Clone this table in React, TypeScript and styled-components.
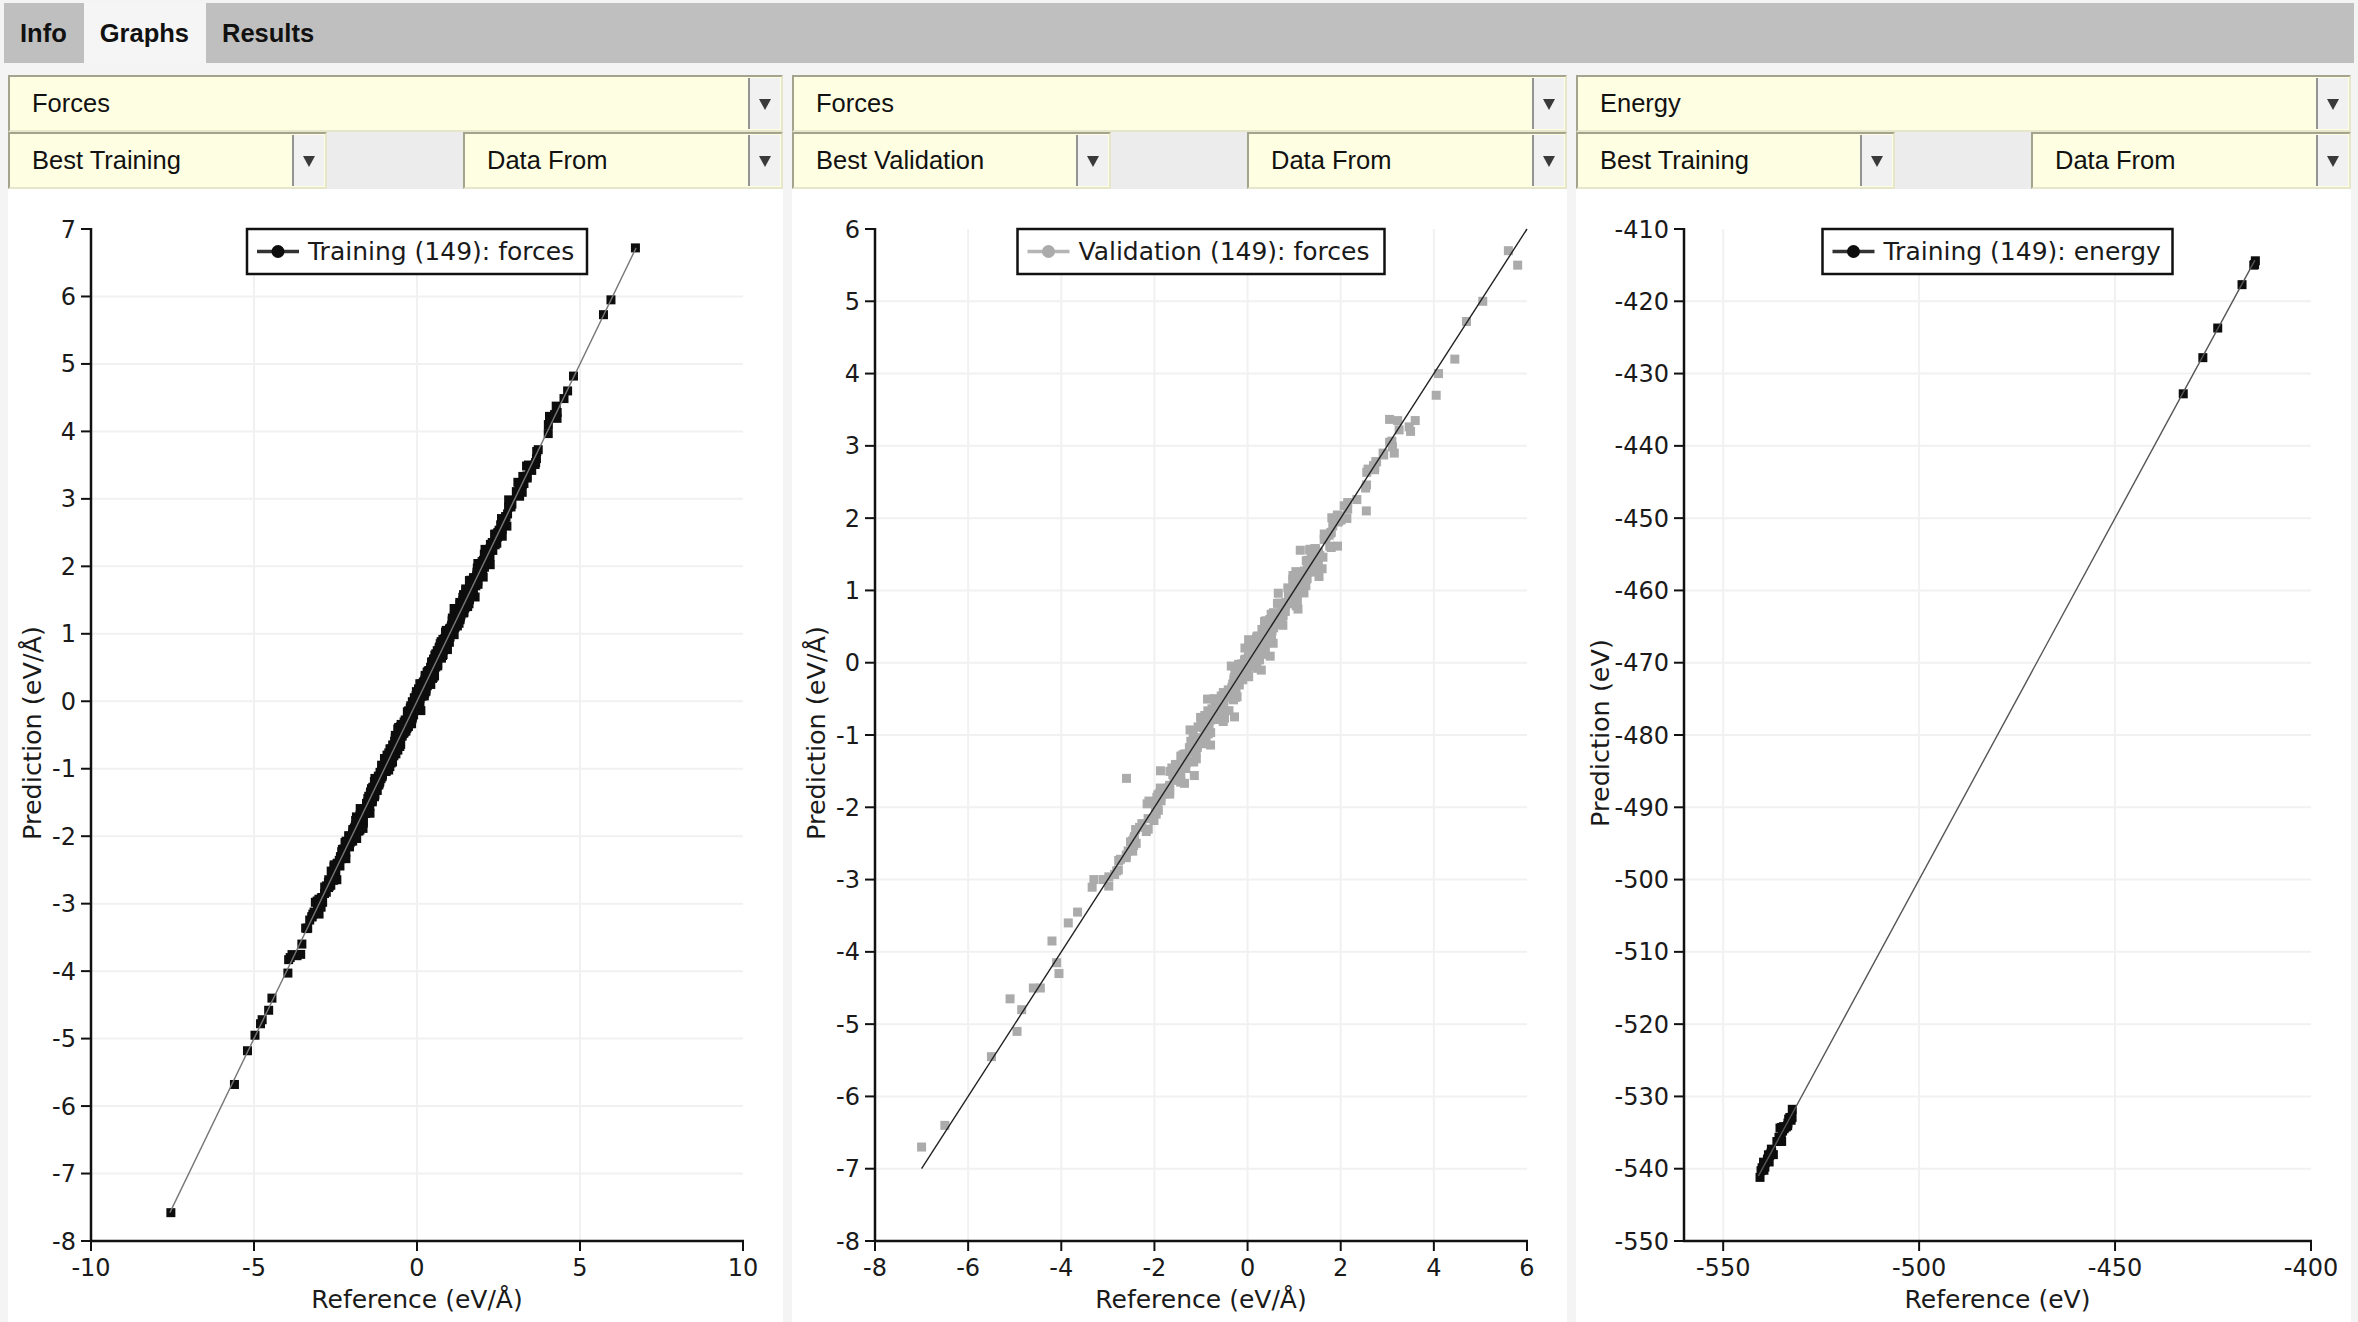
import React, { useMemo } from "react";
import styled, { createGlobalStyle } from "styled-components";

const GlobalStyle = createGlobalStyle`
  html, body { margin: 0; padding: 0; background: #f4f4f4; }
  #root { width: 2358px; height: 1322px; }
`;

const Page = styled.div`
  width: 2358px;
  height: 1322px;
  box-sizing: border-box;
  padding: 3px 4px 0 4px;
  display: flex;
  flex-direction: column;
  background: #f4f4f4;
  font-family: "Liberation Sans", Arial, sans-serif;
  overflow: hidden;
`;

const TabBar = styled.div`
  height: 60px;
  flex: none;
  display: flex;
  align-items: stretch;
  background: #bfbfbf;
`;

const Tab = styled.div<{ $active?: boolean }>`
  display: flex;
  align-items: center;
  padding: 0 17px 0 16px;
  font-weight: bold;
  font-size: 25.5px;
  color: #111;
  background: ${(p) => (p.$active ? "#f5f5f5" : "transparent")};
`;

const Panels = styled.div`
  flex: 1;
  min-height: 0;
  display: grid;
  grid-template-columns: repeat(3, 775px);
  column-gap: 9px;
  padding: 12px 3px 0 4px;
`;

const Panel = styled.div`
  display: flex;
  flex-direction: column;
  min-height: 0;
`;

const SelectBox = styled.div`
  box-sizing: border-box;
  height: 57px;
  display: flex;
  align-items: stretch;
  background: #fefee2;
  border-top: 2px solid #a4a38d;
  border-left: 2px solid #a4a38d;
  border-bottom: 2px solid #e6e6cb;
  border-right: 2px solid #e6e6cb;
`;

const SelectLabel = styled.span`
  flex: 1;
  display: flex;
  align-items: center;
  padding-left: 22px;
  font-size: 25.5px;
  color: #111;
  white-space: nowrap;
`;

const ArrowButton = styled.span`
  width: 30px;
  margin: 1px 1px 1px 0;
  background: #f1f1f1;
  border-left: 2px solid #939393;
  display: flex;
  align-items: center;
  justify-content: center;
  &::after {
    content: "";
    border-left: 6px solid transparent;
    border-right: 6px solid transparent;
    border-top: 11px solid #3a3a3a;
    margin-top: 2px;
  }
`;

const FilterRow = styled.div`
  display: grid;
  grid-template-columns: 319px 1fr 320px;
  height: 57px;
  background: #ececec;
`;

const ChartArea = styled.div`
  flex: 1;
  min-height: 0;
  background: #ffffff;
  overflow: hidden;
`;

const ChartSvg = styled.svg`
  display: block;
`;

const Select: React.FC<{ label: string }> = ({ label }) => (
  <SelectBox>
    <SelectLabel>{label}</SelectLabel>
    <ArrowButton />
  </SelectBox>
);

type Pt = [number, number];

type ChartSpec = {
  xMin: number;
  xMax: number;
  xStep: number;
  xFirst: number;
  yMin: number;
  yMax: number;
  yStep: number;
  left: number;
  legend: string;
  legendWidth: number;
  color: string;
  legendLine: string;
  points: Pt[];
  line: [number, number];
  lineColor: string;
  xTitle: string;
  yTitle: string;
};

const W = 775;
const H = 1133;
const TOP = 40;
const BOTTOM = 1052;
const RIGHT = 735;
const FONT = "'DejaVu Sans', 'Liberation Sans', sans-serif";

function range(a: number, b: number, s: number): number[] {
  const out: number[] = [];
  for (let v = a; v <= b + 1e-9; v += s) out.push(Math.round(v * 1000) / 1000);
  return out;
}

const Chart: React.FC<{ spec: ChartSpec }> = ({ spec }) => {
  const { xMin, xMax, yMin, yMax, left } = spec;
  const sx = (v: number) => left + ((v - xMin) / (xMax - xMin)) * (RIGHT - left);
  const sy = (v: number) => BOTTOM - ((v - yMin) / (yMax - yMin)) * (BOTTOM - TOP);
  const xt = range(spec.xFirst, xMax, spec.xStep);
  const yt = range(yMin, yMax, spec.yStep);
  const cx = (left + RIGHT) / 2;
  const lx = cx - spec.legendWidth / 2;
  return (
    <ChartSvg width={W} height={H} viewBox={`0 0 ${W} ${H}`}>
      {xt
        .filter((v) => v !== xMin && v !== xMax)
        .map((v) => (
          <line key={"gx" + v} x1={sx(v)} x2={sx(v)} y1={TOP} y2={BOTTOM} stroke="#f1f1f1" strokeWidth={2} />
        ))}
      {yt
        .filter((v) => v !== yMin && v !== yMax)
        .map((v) => (
          <line key={"gy" + v} x1={left} x2={RIGHT} y1={sy(v)} y2={sy(v)} stroke="#f1f1f1" strokeWidth={2} />
        ))}
      {spec.points.map(([x, y], i) => (
        <rect key={i} x={sx(x) - 4.5} y={sy(y) - 4.5} width={9} height={9} fill={spec.color} />
      ))}
      <line
        x1={sx(spec.line[0])}
        y1={sy(spec.line[0])}
        x2={sx(spec.line[1])}
        y2={sy(spec.line[1])}
        stroke={spec.lineColor}
        strokeWidth={1.4}
      />
      <line x1={left} x2={left} y1={TOP - 1} y2={BOTTOM + 1} stroke="#111" strokeWidth={2.5} />
      <line x1={left - 1} x2={RIGHT + 1} y1={BOTTOM} y2={BOTTOM} stroke="#111" strokeWidth={2.5} />
      {yt.map((v) => (
        <g key={"ty" + v}>
          <line x1={left - 10} x2={left} y1={sy(v)} y2={sy(v)} stroke="#111" strokeWidth={2} />
          <text x={left - 15} y={sy(v) + 8.5} textAnchor="end" fontFamily={FONT} fontSize={24} fill="#1a1a1a">
            {v}
          </text>
        </g>
      ))}
      {xt.map((v) => (
        <g key={"tx" + v}>
          <line x1={sx(v)} x2={sx(v)} y1={BOTTOM} y2={BOTTOM + 10} stroke="#111" strokeWidth={2} />
          <text x={sx(v)} y={1087} textAnchor="middle" fontFamily={FONT} fontSize={24} fill="#1a1a1a">
            {v}
          </text>
        </g>
      ))}
      <text x={cx} y={1119} textAnchor="middle" fontFamily={FONT} fontSize={25} fill="#1a1a1a">
        {spec.xTitle}
      </text>
      <text
        transform={`translate(33, ${(TOP + BOTTOM) / 2 - 2}) rotate(-90)`}
        textAnchor="middle"
        fontFamily={FONT}
        fontSize={25.5}
        fill="#1a1a1a"
      >
        {spec.yTitle}
      </text>
      <rect x={lx} y={TOP} width={spec.legendWidth} height={45} fill="#fff" stroke="#111" strokeWidth={2.5} />
      <line x1={lx + 10} x2={lx + 52} y1={TOP + 22.5} y2={TOP + 22.5} stroke={spec.legendLine} strokeWidth={3.5} />
      <circle cx={lx + 31} cy={TOP + 22.5} r={6.5} fill={spec.color} />
      <text x={lx + 61} y={TOP + 31} fontFamily={FONT} fontSize={25} fill="#1a1a1a">
        {spec.legend}
      </text>
    </ChartSvg>
  );
};

function mulberry(seed: number) {
  let s = seed;
  return () => {
    s |= 0;
    s = (s + 0x6d2b79f5) | 0;
    let t = Math.imul(s ^ (s >>> 15), 1 | s);
    t = (t + Math.imul(t ^ (t >>> 7), 61 | t)) ^ t;
    return ((t ^ (t >>> 14)) >>> 0) / 4294967296;
  };
}

function gauss(r: () => number) {
  const u = Math.max(r(), 1e-9);
  const v = r();
  return Math.sqrt(-2 * Math.log(u)) * Math.cos(2 * Math.PI * v);
}

function trainingForces(): Pt[] {
  const r = mulberry(17);
  const pts: Pt[] = [];
  while (pts.length < 900) {
    const x = gauss(r) * 1.6;
    if (x < -4.4 || x > 4.75) continue;
    pts.push([x, x + gauss(r) * 0.075]);
  }
  const extra: Pt[] = [
    [6.7, 6.72], [5.95, 5.95], [5.72, 5.73], [4.8, 4.82], [4.62, 4.6], [4.3, 4.28], [4.22, 4.25],
    [-4.45, -4.4], [-4.55, -4.58], [-4.75, -4.72], [-4.8, -4.78], [-4.97, -4.95], [-5.2, -5.18],
    [-5.6, -5.68], [-7.55, -7.58],
  ];
  return pts.concat(extra);
}

function validationForces(): Pt[] {
  const r = mulberry(91);
  const pts: Pt[] = [];
  while (pts.length < 420) {
    const x = gauss(r) * 1.45;
    if (x < -3.4 || x > 3.6) continue;
    const n = r() < 0.15 ? 0.22 : 0.1;
    pts.push([x, x + gauss(r) * n]);
  }
  const extra: Pt[] = [
    [-7.0, -6.7], [-6.5, -6.4], [-5.5, -5.45], [-5.1, -4.65], [-4.95, -5.1], [-4.85, -4.8],
    [-4.6, -4.5], [-4.45, -4.5], [-4.2, -3.85], [-4.1, -4.15], [-4.05, -4.3], [-3.85, -3.6],
    [-3.65, -3.45], [-3.3, -3.0], [-3.1, -3.0], [-2.6, -1.6],
    [5.6, 5.7], [5.8, 5.5], [5.05, 5.0], [4.7, 4.72], [4.45, 4.2], [4.05, 3.7], [4.1, 4.0],
    [3.6, 3.35], [3.5, 3.2], [3.05, 3.05], [3.15, 2.9], [2.55, 2.1], [1.6, 1.3],
  ];
  return pts.concat(extra);
}

function trainingEnergy(): Pt[] {
  const r = mulberry(5);
  const pts: Pt[] = [];
  for (let i = 0; i < 40; i++) {
    const x = -540.5 + r() * 8.2;
    pts.push([x, x + gauss(r) * 0.4]);
  }
  pts.push([-540.6, -541.2], [-539.5, -539.6], [-432.6, -432.8], [-427.6, -427.8], [-423.8, -423.7],
    [-417.6, -417.7], [-414.6, -415.0], [-414.2, -414.4], [-414.4, -414.9]);
  return pts;
}

const FORCE_X = "Reference (eV/Å)";
const FORCE_Y = "Prediction (eV/Å)";

export default function App() {
  const specs = useMemo<ChartSpec[]>(
    () => [
      {
        xMin: -10, xMax: 10, xStep: 5, xFirst: -10,
        yMin: -8, yMax: 7, yStep: 1,
        left: 83,
        legend: "Training (149): forces",
        legendWidth: 340,
        color: "#0d0d0d",
        legendLine: "#333",
        points: trainingForces(),
        line: [-7.58, 6.72],
        lineColor: "#777",
        xTitle: FORCE_X,
        yTitle: FORCE_Y,
      },
      {
        xMin: -8, xMax: 6, xStep: 2, xFirst: -8,
        yMin: -8, yMax: 6, yStep: 1,
        left: 83,
        legend: "Validation (149): forces",
        legendWidth: 367,
        color: "#ababab",
        legendLine: "#b5b5b5",
        points: validationForces(),
        line: [-7.0, 6.0],
        lineColor: "#222",
        xTitle: FORCE_X,
        yTitle: FORCE_Y,
      },
      {
        xMin: -560, xMax: -400, xStep: 50, xFirst: -550,
        yMin: -550, yMax: -410, yStep: 10,
        left: 108,
        legend: "Training (149): energy",
        legendWidth: 350,
        color: "#0d0d0d",
        legendLine: "#333",
        points: trainingEnergy(),
        line: [-541, -414.3],
        lineColor: "#555",
        xTitle: "Reference (eV)",
        yTitle: "Prediction (eV)",
      },
    ],
    []
  );

  const panels = [
    { quantity: "Forces", best: "Best Training" },
    { quantity: "Forces", best: "Best Validation" },
    { quantity: "Energy", best: "Best Training" },
  ];

  return (
    <>
      <GlobalStyle />
      <Page>
        <TabBar>
          <Tab>Info</Tab>
          <Tab $active>Graphs</Tab>
          <Tab>Results</Tab>
        </TabBar>
        <Panels>
          {panels.map((p, i) => (
            <Panel key={i}>
              <Select label={p.quantity} />
              <FilterRow>
                <Select label={p.best} />
                <span />
                <Select label="Data From" />
              </FilterRow>
              <ChartArea>
                <Chart spec={specs[i]} />
              </ChartArea>
            </Panel>
          ))}
        </Panels>
      </Page>
    </>
  );
}
